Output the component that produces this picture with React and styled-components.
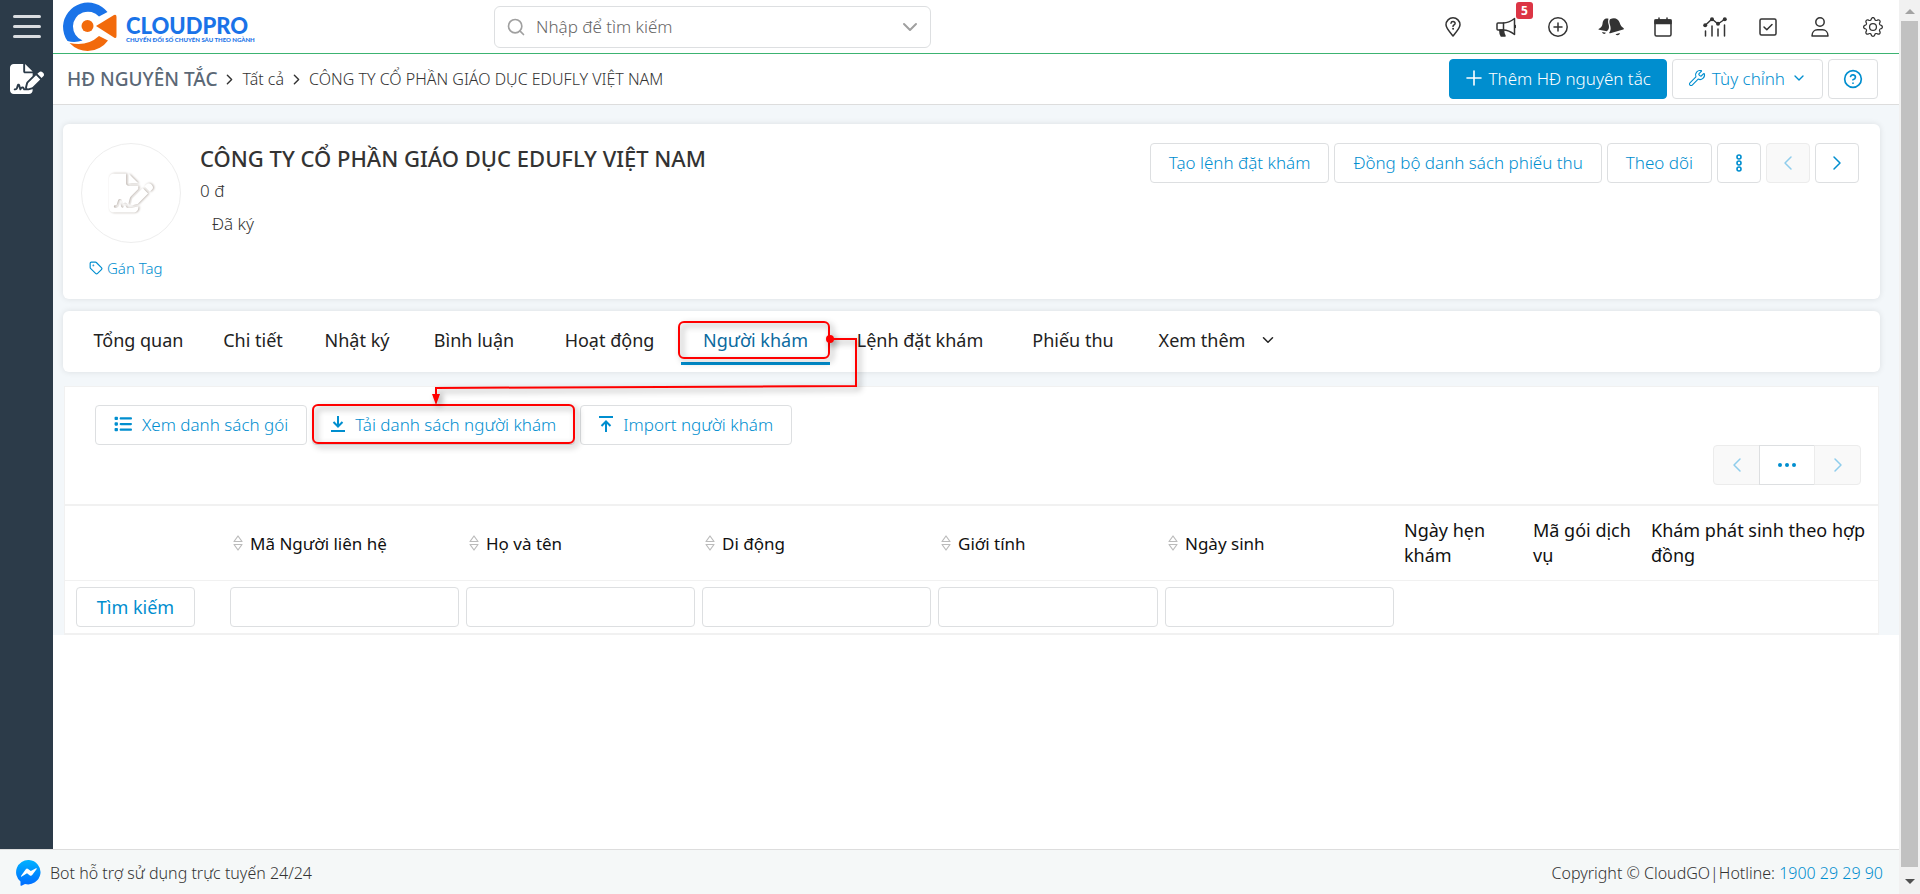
import React from 'react'
import styled, { createGlobalStyle, css } from 'styled-components'
import { Search, ChevronDown, ChevronLeft, ChevronRight, Wrench, CircleHelp, Tag } from 'lucide-react'
import { FaFileSignature, FaList } from 'react-icons/fa6'
import { BsGear } from 'react-icons/bs'

const colors = {
  primary: '#008ecf',
  dark: '#2c3b49',
  text: '#333333',
  border: '#dddfe1',
  line: '#f1f1f1',
  page: '#f3f7fa',
  red: '#ff0000'
}

const GlobalStyle = createGlobalStyle`
  * {
    box-sizing: border-box;
  }
  body {
    margin: 0;
    background-color: #ffffff;
    color: ${colors.text};
    font-family: 'Noto Sans', 'Open Sans', sans-serif;
    font-size: 17px;
    font-weight: 300;
  }
  button, input {
    font: inherit;
    color: inherit;
  }
  a {
    color: inherit;
    text-decoration: none;
  }
  svg {
    display: block;
    flex: none;
  }
`

const Page = styled.div`
  display: grid;
  grid-template-columns: 1fr 21px;
  min-height: 100vh;
`

const Window = styled.div`
  display: flex;
  flex-direction: column;
`

const Body = styled.div`
  display: flex;
  flex: 1;
`

const Sidebar = styled.nav`
  display: flex;
  flex-direction: column;
  align-items: center;
  gap: 24px;
  width: 53px;
  padding-top: 15px;
  background-color: ${colors.dark};
  color: #ffffff;
`

const MenuButton = styled.button`
  display: flex;
  flex-direction: column;
  gap: 7px;
  padding: 0;
  border: 0;
  background: none;
  cursor: pointer;
`

const MenuBar = styled.span`
  width: 28px;
  height: 3px;
  border-radius: 2px;
  background-color: #d9dce0;
`

const Main = styled.div`
  flex: 1;
  min-width: 0;
`

const Header = styled.header`
  display: grid;
  grid-template-columns: 441px 437px 1fr;
  align-items: center;
  height: 54px;
  border-bottom: 1px solid #3cb371;
`

const Brand = styled.a`
  display: flex;
  align-items: center;
  gap: 9px;
  padding-left: 10px;
`

const BrandText = styled.span`
  display: flex;
  flex-direction: column;
  padding-top: 6px;
  color: #1a73e8;
`

const BrandName = styled.span`
  font-family: Lato, sans-serif;
  font-size: 22px;
  font-weight: 900;
  line-height: 20px;
`

const BrandSlogan = styled.span`
  font-family: Lato, sans-serif;
  font-size: 6px;
  font-weight: 900;
  line-height: 8px;
  white-space: nowrap;
`

const SearchBox = styled.label`
  display: flex;
  align-items: center;
  height: 42px;
  padding: 0 8px 0 11px;
  border: 1px solid ${colors.border};
  border-radius: 6px;
  color: #a0a0a0;
`

const SearchInput = styled.input`
  flex: 1;
  padding: 0 10px;
  border: 0;
  outline: 0;
  background: none;
  color: ${colors.text};
  &::placeholder {
    color: #666666;
  }
`

const HeaderIcons = styled.div`
  display: grid;
  grid-template-columns: repeat(9, 1fr);
  justify-self: end;
  width: 472px;
`

const IconButton = styled.button`
  position: relative;
  display: flex;
  justify-content: center;
  padding: 0;
  border: 0;
  background: none;
  cursor: pointer;
`

const Badge = styled.span`
  position: absolute;
  top: -15px;
  right: -1px;
  width: 17px;
  border-radius: 3px;
  background-color: #dc3545;
  color: #ffffff;
  font-size: 12px;
  font-weight: 700;
  line-height: 17px;
`

const TitleBar = styled.div`
  display: flex;
  align-items: center;
  justify-content: space-between;
  height: 51px;
  padding: 0 21px 0 14px;
  border-bottom: 1px solid #dddddd;
`

const Breadcrumb = styled.nav`
  display: flex;
  align-items: center;
  gap: 4px;
  font-size: 16px;
`

const ModuleName = styled.a`
  color: #5b6876;
  font-size: 19px;
  font-weight: 500;
  line-height: 24px;
`

const Actions = styled.div`
  display: flex;
  gap: 5px;
`

const Button = styled.button`
  display: inline-flex;
  align-items: center;
  justify-content: center;
  gap: 10px;
  height: 40px;
  padding: 0 18px 2px;
  border: 1px solid ${colors.border};
  border-radius: 4px;
  background-color: #ffffff;
  color: ${colors.primary};
  white-space: nowrap;
  cursor: pointer;
  ${props => props.$compact && css`
    gap: 6px;
    padding: 0 15px 2px;
  `}
  ${props => props.$square && css`
    width: 44px;
    padding: 0;
  `}
  ${props => props.$filled && css`
    border-color: ${colors.primary};
    background-color: ${colors.primary};
    color: #ffffff;
  `}
  &:disabled {
    border-color: #ececec;
    background-color: #f9f9f9;
    color: #8fcdec;
    cursor: default;
  }
`

const HelpButton = styled(Button)`
  width: 50px;
`

const Content = styled.main`
  padding: 19px 19px 0 10px;
  background-color: ${colors.page};
`

const Card = styled.section`
  border-radius: 6px;
  background-color: #ffffff;
  box-shadow: 0 0 6px rgba(0, 0, 0, 0.1);
`

const Summary = styled(Card)`
  display: flex;
  align-items: flex-start;
  height: 175px;
  padding: 19px 21px 0 18px;
`

const Identity = styled.div`
  display: flex;
  flex-direction: column;
  gap: 15px;
`

const Avatar = styled.div`
  display: flex;
  align-items: center;
  justify-content: center;
  width: 100px;
  height: 100px;
  border: 1px solid #eeeeee;
  border-radius: 50%;
  color: #ffffff;
  svg {
    filter: drop-shadow(1px 0 1px #b5aca5);
  }
`

const TagLink = styled.a`
  display: flex;
  align-items: center;
  gap: 4px;
  padding-left: 8px;
  color: ${colors.primary};
  font-size: 15px;
  line-height: 20px;
`

const Facts = styled.div`
  flex: 1;
  padding-left: 19px;
`

const CompanyName = styled.h1`
  margin: 0;
  font-size: 22px;
  font-weight: 500;
  line-height: 30px;
`

const Amount = styled.div`
  line-height: 36px;
`

const Status = styled.div`
  padding-left: 12px;
  line-height: 30px;
`

const Tabs = styled(Card)`
  display: flex;
  height: 61px;
  margin-top: 12px;
  padding: 0 12px;
`

const Tab = styled.a`
  position: relative;
  display: flex;
  align-items: center;
  justify-content: center;
  gap: 14px;
  width: ${props => props.$width}px;
  height: 54px;
  padding-top: 7px;
  border-bottom: 3px solid ${props => props.$active ? colors.primary : 'transparent'};
  color: ${props => props.$active ? '#0b6aa0' : '#222222'};
  font-size: 18px;
  font-weight: 400;
  white-space: nowrap;
`

const Ring = styled.span`
  position: absolute;
  inset: ${props => props.$inset};
  border: 2px solid ${colors.red};
  border-radius: 6px;
  filter: drop-shadow(3px 3px 3px rgba(0, 0, 0, 0.4));
  pointer-events: none;
`

const Connector = styled.svg`
  position: absolute;
  top: 19px;
  right: -26px;
  z-index: 1;
  overflow: visible;
  filter: drop-shadow(3px 3px 3px rgba(0, 0, 0, 0.4));
  pointer-events: none;
`

const Panel = styled.section`
  margin: 14px 1px 0;
  border: 1px solid ${colors.line};
  background-color: #ffffff;
`

const Toolbar = styled.div`
  display: flex;
  gap: 5px;
  padding: 18px 30px 0;
`

const Anchor = styled.div`
  position: relative;
`

const Pager = styled.div`
  display: flex;
  justify-content: flex-end;
  padding: 0 17px 19px;
`

const PagerButton = styled(Button)`
  width: ${props => props.$wide ? '56px' : '47px'};
  margin-left: -1px;
  border-radius: ${props => props.$radius || '0'};
`

const Table = styled.table`
  width: 100%;
  border-top: 2px solid ${colors.line};
  border-collapse: separate;
  border-spacing: 0;
  table-layout: fixed;
`

const HeadCell = styled.th`
  height: 75px;
  padding: 0 5px 0 6px;
  border-bottom: 1px solid ${colors.line};
  color: #111111;
  font-size: 18px;
  font-weight: 400;
  line-height: 25px;
  text-align: left;
`

const SortLabel = styled.span`
  display: flex;
  align-items: center;
  gap: 7px;
  font-size: 17px;
`

const Cell = styled.td`
  height: 53px;
  padding: 0 4px 0 3px;
  border-bottom: 1px solid ${colors.line};
`

const FirstCell = styled(Cell)`
  padding-left: 11px;
`

const SearchButton = styled(Button)`
  width: 119px;
  font-size: 18px;
  font-weight: 400;
`

const FilterInput = styled.input`
  display: block;
  width: 100%;
  height: 40px;
  padding: 0 10px;
  border: 1px solid ${colors.border};
  border-radius: 4px;
`

const Footer = styled.footer`
  display: flex;
  align-items: center;
  justify-content: space-between;
  height: 45px;
  padding: 2px 16px 0;
  border-top: 1px solid #dddddd;
  background-color: #f5f8f8;
  font-size: 16px;
`

const BotLink = styled.a`
  display: flex;
  align-items: center;
  gap: 8px;
`

const Hotline = styled.a`
  color: ${colors.primary};
`

const Scrollbar = styled.div`
  display: flex;
  flex-direction: column;
  align-items: center;
  justify-content: space-between;
  background-color: #f1f1f1;
`

const ScrollThumb = styled.div`
  flex: 1;
  width: 17px;
  margin-bottom: 12px;
  background-color: #c1c1c1;
`

const ScrollArrow = styled.span`
  border: 5px solid transparent;
  ${props => props.$up ? css`
    margin: 4px 0 7px;
    border-bottom-color: #a3a3a3;
  ` : css`
    margin-bottom: 5px;
    border-top-color: #505050;
  `}
`

const Icon = ({ width = 20, height = 20, children }) => (
  <svg width={width} height={height} viewBox={`0 0 ${width} ${height}`} fill="none" stroke="currentColor" strokeWidth="1.5" strokeLinecap="round" strokeLinejoin="round">
    {children}
  </svg>
)

const Logo = () => (
  <svg width="54" height="51" viewBox="0 0 54 51">
    <path d="M44.500 11 A25 25 0 0 0 0 25 Q0 34 4.500 40 Q12 42 19.500 39.500 A15 15 0 0 1 10 25 A15 15 0 0 1 36 15.500 Z" fill="#1a73e8" />
    <path d="M6.500 42 Q24 46 36 35 L45 39.500 A25 25 0 0 1 6.500 42Z" fill="#f26a0c" />
    <circle cx="24.500" cy="25" r="6" fill="#f26a0c" />
    <path d="M33 25 L51 14 Q53.500 13 53.500 16 V35 Q53.500 38 51 36.500Z" fill="#f26a0c" />
  </svg>
)

const headerIcons = [
  {
    label: 'Hỗ trợ',
    icon: (
      <Icon>
        <path d="M10 19C7.500 15.800 3 11.200 3 7.800a7 7 0 0 1 14 0C17 11.200 12.500 15.800 10 19z" />
        <path d="M8 6.300c.2-2.400 4.200-2.200 4.100.1 0 1.500-2.100 1.500-2.100 3" />
        <circle cx="10" cy="11.800" r=".5" fill="currentColor" strokeWidth="1" />
      </Icon>
    )
  },
  {
    label: 'Thông báo',
    badge: 5,
    icon: (
      <Icon>
        <path d="M7.500 6H2a1 1 0 0 0-1 1v5a1 1 0 0 0 1 1h5.500z" />
        <path d="M7.500 6c4.200 0 7.500-1.800 11-4.500v16c-3.500-2.700-6.800-4.500-11-4.500M19.300 8.500v2" />
        <path d="M3.800 13h3.700c0 2.500.3 4 1.500 6H5.300c-1.300-2-1.500-3.800-1.500-6z" fill="currentColor" />
      </Icon>
    )
  },
  {
    label: 'Tạo nhanh',
    icon: (
      <Icon>
        <circle cx="10" cy="10" r="9.200" />
        <path d="M10 6v8M6 10h8" />
      </Icon>
    )
  },
  {
    label: 'Nhắc nhở',
    icon: (
      <Icon width={26} height={20}>
        <g fill="currentColor" stroke="none">
          <path d="M10.500 1.700c-4.500-.9-5.600 2-6 5.200-.4 2.500-1.800 3.600-3.600 4.800-.6.500-.3 1 .3 1.100l7.600 1.400c2.500-1.500 2.500-4.500 1.800-6.700-.8-2.500-.5-4.600-.1-5.800z" />
          <path d="M12 2.200c4.500-2.300 8.300-.6 9.600 3.300 1 3.200 1.900 4.300 3.800 5.400.8.500.6 1.500-.2 1.700l-12.900 3.700c-.9.300-1.400-.4-.9-1.100 1.500-1.900 1.500-4.400.6-7.300-.9-2.600-.8-4.200 0-5.700z" />
          <path d="M4 15l4 .8c-.8 1.700-3.300 1.400-4-.8zM17.500 17.200l4.300-1.300c.2 2-2.600 3.200-4.300 1.300z" />
        </g>
      </Icon>
    )
  },
  {
    label: 'Lịch',
    icon: (
      <Icon>
        <rect x="2" y="3" width="16" height="16" rx="1.500" />
        <path d="M2 3h16v3.500H2z" fill="currentColor" />
        <path d="M6 1v2M14 1v2" />
      </Icon>
    )
  },
  {
    label: 'Báo cáo',
    icon: (
      <Icon width={24} height={20}>
        <path d="M2 8.500l7-6.500 6 5 7-5" />
        <g fill="currentColor" stroke="none">
          <circle cx="2.200" cy="8.300" r="2" />
          <circle cx="9" cy="2.300" r="2" />
          <circle cx="15" cy="6.800" r="2" />
          <circle cx="21.800" cy="2.300" r="2" />
        </g>
        <path d="M2.500 14v5M9 9v10M15 12v7M21.500 8v11" />
      </Icon>
    )
  },
  {
    label: 'Công việc',
    icon: (
      <Icon>
        <rect x="2" y="2" width="16" height="16" rx="1.500" />
        <path d="M6 10l2.800 2.800L14 7.500" />
      </Icon>
    )
  },
  {
    label: 'Tài khoản',
    icon: (
      <Icon>
        <circle cx="10" cy="5" r="4.200" />
        <path d="M2 19c0-4 2.500-6.200 5.500-6.200h5c3 0 5.500 2.200 5.500 6.200z" />
      </Icon>
    )
  },
  { label: 'Cài đặt', icon: <BsGear size={20} /> }
]

const tabs = [
  { label: 'Tổng quan', width: 127 },
  { label: 'Chi tiết', width: 102 },
  { label: 'Nhật ký', width: 106 },
  { label: 'Bình luận', width: 128 },
  { label: 'Hoạt động', width: 143 },
  { label: 'Người khám', width: 149, active: true },
  { label: 'Lệnh đặt khám', width: 180 },
  { label: 'Phiếu thu', width: 126 },
  { label: 'Xem thêm', width: 164, more: true }
]

const columns = [
  { label: 'Mã Người liên hệ', width: 236, sortable: true },
  { label: 'Họ và tên', width: 236, sortable: true },
  { label: 'Di động', width: 236, sortable: true },
  { label: 'Giới tính', width: 227, sortable: true },
  { label: 'Ngày sinh', width: 236, sortable: true },
  { label: 'Ngày hẹn khám', width: 129 },
  { label: 'Mã gói dịch vụ', width: 118 },
  { label: 'Khám phát sinh theo hợp đồng', width: 233 }
]

const SortIcon = () => (
  <svg width="10" height="16" viewBox="0 0 10 16" fill="none" stroke="#bbbbbb" strokeWidth="1.200" strokeLinejoin="round">
    <path d="M5 1l4 5.500H1zM5 15l4-5.500H1z" />
  </svg>
)

const PlusIcon = () => (
  <svg width="18" height="18" viewBox="0 0 18 18" fill="none" stroke="currentColor" strokeWidth="1.600" strokeLinecap="round">
    <path d="M9 2v14M2 9h14" />
  </svg>
)

const DownloadIcon = () => (
  <svg width="14" height="16" viewBox="0 0 14 16" fill="none" stroke="currentColor" strokeWidth="2">
    <path d="M7 0v10M2.500 6L7 10.500 11.500 6M0 15h14" />
  </svg>
)

const ImportIcon = () => (
  <svg width="14" height="16" viewBox="0 0 14 16" fill="none" stroke="currentColor" strokeWidth="2">
    <path d="M7 16V6M2.500 10L7 5.500 11.500 10M0 1h14" />
  </svg>
)

const DotsIcon = () => (
  <svg width="8" height="20" viewBox="0 0 8 20" fill="none" stroke="currentColor" strokeWidth="1.600">
    <circle cx="4" cy="4" r="2" />
    <circle cx="4" cy="10" r="2" />
    <circle cx="4" cy="16" r="2" />
  </svg>
)

const MoreIcon = () => (
  <svg width="18" height="4" viewBox="0 0 18 4" fill="currentColor">
    <circle cx="2" cy="2" r="2" />
    <circle cx="9" cy="2" r="2" />
    <circle cx="16" cy="2" r="2" />
  </svg>
)

const MessengerIcon = () => (
  <svg width="26" height="26" viewBox="0 0 26 26">
    <defs>
      <linearGradient id="messenger" x1="0" y1="0" x2="0" y2="1">
        <stop offset="0" stopColor="#00b2ff" />
        <stop offset="1" stopColor="#006aff" />
      </linearGradient>
    </defs>
    <path d="M13 0a12.500 12.200 0 1 1-4 24l-3.500 1.800q-1 .2-1-.9V21.500A12.500 12.200 0 0 1 13 0z" fill="url(#messenger)" />
    <path d="M5 16l4.800-6.800q1-1.200 2.300-.3l2.700 2.100 5.200-2.700q1.200-.3.700.7L16.200 15q-1 1.300-2.300.4L11 13.300l-5.200 3.300q-1.200.4-.8-.6z" fill="#ffffff" />
  </svg>
)

export default () => (
  <Page>
    <GlobalStyle />
    <Window>
      <Body>
        <Sidebar>
          <MenuButton aria-label="Menu">
            <MenuBar />
            <MenuBar />
            <MenuBar />
          </MenuButton>
          <a href="#contracts" aria-label="Hợp đồng"><FaFileSignature size={34} /></a>
        </Sidebar>
        <Main>
          <Header>
            <Brand href="#home">
              <Logo />
              <BrandText>
                <BrandName>CLOUDPRO</BrandName>
                <BrandSlogan>CHUYỂN ĐỔI SỐ CHUYÊN SÂU THEO NGÀNH</BrandSlogan>
              </BrandText>
            </Brand>
            <SearchBox>
              <Search size={20} strokeWidth={2} />
              <SearchInput type="text" placeholder="Nhập để tìm kiếm" />
              <ChevronDown size={24} strokeWidth={2} />
            </SearchBox>
            <HeaderIcons>
              {headerIcons.map(item => (
                <IconButton key={item.label} aria-label={item.label}>
                  {item.icon}
                  {item.badge && <Badge>{item.badge}</Badge>}
                </IconButton>
              ))}
            </HeaderIcons>
          </Header>
          <TitleBar>
            <Breadcrumb>
              <ModuleName href="#list">HĐ NGUYÊN TẮC</ModuleName>
              <ChevronRight size={17} />
              <a href="#all">Tất cả</a>
              <ChevronRight size={17} />
              <span>CÔNG TY CỔ PHẦN GIÁO DỤC EDUFLY VIỆT NAM</span>
            </Breadcrumb>
            <Actions>
              <Button $compact $filled><PlusIcon />Thêm HĐ nguyên tắc</Button>
              <Button $compact><Wrench size={18} strokeWidth={1.500} />Tùy chỉnh<ChevronDown size={16} /></Button>
              <HelpButton $square aria-label="Trợ giúp"><CircleHelp size={20} /></HelpButton>
            </Actions>
          </TitleBar>
          <Content>
            <Summary>
              <Identity>
                <Avatar><FaFileSignature size={44} /></Avatar>
                <TagLink href="#tag"><Tag size={14} />Gán Tag</TagLink>
              </Identity>
              <Facts>
                <CompanyName>CÔNG TY CỔ PHẦN GIÁO DỤC EDUFLY VIỆT NAM</CompanyName>
                <Amount>0 đ</Amount>
                <Status>Đã ký</Status>
              </Facts>
              <Actions>
                <Button>Tạo lệnh đặt khám</Button>
                <Button>Đồng bộ danh sách phiếu thu</Button>
                <Button>Theo dõi</Button>
                <Button $square aria-label="Thêm thao tác"><DotsIcon /></Button>
                <Button $square disabled aria-label="Trước"><ChevronLeft size={24} strokeWidth={1.500} /></Button>
                <Button $square aria-label="Sau"><ChevronRight size={24} strokeWidth={1.500} /></Button>
              </Actions>
            </Summary>
            <Tabs as="nav">
              {tabs.map(tab => (
                <Tab key={tab.label} href="#tab" $width={tab.width} $active={tab.active}>
                  {tab.label}
                  {tab.more && <ChevronDown size={18} />}
                  {tab.active && <Ring $inset="10px 0 3px -3px" />}
                  {tab.active && (
                    <Connector width="420" height="76" viewBox="0 0 420 76" fill="none" stroke={colors.red} strokeWidth="2">
                      <path d="M394 9h26v47L0 58v8" />
                      <circle cx="394" cy="9" r="4" fill={colors.red} stroke="none" />
                      <path d="M-4 64h8L0 75z" fill={colors.red} stroke="none" />
                    </Connector>
                  )}
                </Tab>
              ))}
            </Tabs>
            <Panel>
              <Toolbar>
                <Button><FaList size={18} />Xem danh sách gói</Button>
                <Anchor>
                  <Button><DownloadIcon />Tải danh sách người khám</Button>
                  <Ring $inset="-1px 0 1px 0" />
                </Anchor>
                <Button><ImportIcon />Import người khám</Button>
              </Toolbar>
              <Pager>
                <PagerButton $square disabled $radius="4px 0 0 4px" aria-label="Trang trước"><ChevronLeft size={24} strokeWidth={1.500} /></PagerButton>
                <PagerButton $square $wide aria-label="Chọn trang"><MoreIcon /></PagerButton>
                <PagerButton $square disabled $radius="0 4px 4px 0" aria-label="Trang sau"><ChevronRight size={24} strokeWidth={1.500} /></PagerButton>
              </Pager>
              <Table>
                <colgroup>
                  <col width="162" />
                  {columns.map(column => <col key={column.label} width={column.width} />)}
                </colgroup>
                <thead>
                  <tr>
                    <HeadCell aria-label="Thao tác" />
                    {columns.map(column => (
                      <HeadCell key={column.label} scope="col">
                        {column.sortable ? <SortLabel><SortIcon />{column.label}</SortLabel> : column.label}
                      </HeadCell>
                    ))}
                  </tr>
                </thead>
                <tbody>
                  <tr>
                    <FirstCell><SearchButton $square>Tìm kiếm</SearchButton></FirstCell>
                    {columns.map(column => (
                      <Cell key={column.label}>
                        {column.sortable && <FilterInput type="text" aria-label={column.label} />}
                      </Cell>
                    ))}
                  </tr>
                </tbody>
              </Table>
            </Panel>
          </Content>
        </Main>
      </Body>
      <Footer>
        <BotLink href="#bot"><MessengerIcon />Bot hỗ trợ sử dụng trực tuyến 24/24</BotLink>
        <span>Copyright © CloudGO|Hotline: <Hotline href="tel:1900292990">1900 29 29 90</Hotline></span>
      </Footer>
    </Window>
    <Scrollbar aria-hidden="true">
      <ScrollArrow $up />
      <ScrollThumb />
      <ScrollArrow />
    </Scrollbar>
  </Page>
)
